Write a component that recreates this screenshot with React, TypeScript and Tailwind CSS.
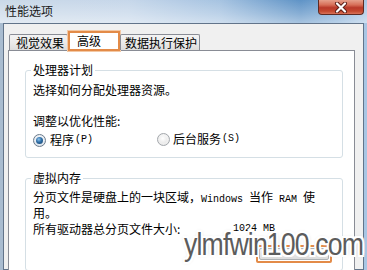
import React from "react";

const mono = "font-['Liberation_Mono',monospace] text-[10px]";

function Radio({ checked }: { checked: boolean }) {
  return (
    <div
      className={
        "w-[13px] h-[13px] rounded-full border flex items-center justify-center shrink-0 " +
        (checked
          ? "border-[#6b7a8a] bg-[radial-gradient(circle_at_50%_40%,#ffffff_0%,#dfe6ee_70%,#c3ccd6_100%)]"
          : "border-[#a3a7ac] bg-[radial-gradient(circle_at_50%_40%,#ffffff_0%,#ebebeb_70%,#d6d6d6_100%)]")
      }
    >
      {checked ? (
        <div className="w-[7px] h-[7px] rounded-full bg-[radial-gradient(circle_at_40%_35%,#8ec4ee_0%,#2f6ea6_45%,#123d66_100%)]" />
      ) : (
        <div className="w-[7px] h-[7px] rounded-full bg-[radial-gradient(circle_at_40%_35%,#ffffff_0%,#e3e3e3_100%)]" />
      )}
    </div>
  );
}

export default function App() {
  return (
    <div className="relative w-[367px] h-[270px] overflow-hidden flex flex-col bg-[linear-gradient(90deg,#a9bcd0_0%,#bcd2e8_50%,#a8c6e4_100%)] font-['Noto_Sans_CJK_SC',sans-serif] text-[12px] leading-[12px] text-black">
      {/* title bar */}
      <div className="h-[23px] shrink-0 flex items-start justify-between bg-[linear-gradient(180deg,rgba(255,255,255,0)_0%,rgba(255,255,255,0.25)_60%,rgba(255,255,255,0.45)_100%),linear-gradient(90deg,#cbd9e8_0%,#c6d7ea_35%,#a6c3e1_60%,#5f93c6_82%,#7fabd6_92%,#a9c7e5_100%)]">
        <span className="mt-[4px] ml-[5px] text-[12px] leading-[13px] text-[#1a1a1a]">性能选项</span>
        <div className="mr-[3px] w-[46px] h-[15px] rounded-b-[4px] border border-t-0 border-[#5e2a22] bg-[linear-gradient(180deg,#e6a08c_0%,#d76f58_35%,#b9392a_55%,#c4492f_80%,#d9735a_100%)] flex items-center justify-center">
          <svg width="14" height="11" viewBox="0 0 14 11">
            <path d="M3 1.5 L11 9.5 M11 1.5 L3 9.5" stroke="#5a1d16" strokeWidth="4" strokeLinecap="round" />
            <path d="M3 1.5 L11 9.5 M11 1.5 L3 9.5" stroke="#ffffff" strokeWidth="2.2" strokeLinecap="round" />
          </svg>
        </div>
      </div>

      {/* window body */}
      <div className="mx-[3px] flex-1 min-h-0 bg-[#f0f0f0] border border-[#62748a] pl-[4px] pr-[8px] pt-[7px] flex flex-col">
        {/* tabs */}
        <div className="flex items-end h-[19px] shrink-0 relative z-10">
          <div className="ml-[1px] w-[59px] h-[16px] border border-b-0 border-[#898c95] rounded-t-[2px] bg-[linear-gradient(180deg,#f3f3f3_0%,#ebebeb_50%,#dddddd_100%)] pl-[6px] flex items-center">
            视觉效果
          </div>
          <div className="w-[52px] h-[20px] -mb-px bg-white border-2 border-[#e38b48] shadow-[0_0_0_1px_#f3c8a4] pl-[7px] pt-[2px] flex items-start">
            高级
          </div>
          <div className="w-[80px] h-[16px] border border-b-0 border-[#898c95] rounded-t-[2px] bg-[linear-gradient(180deg,#f3f3f3_0%,#ebebeb_50%,#dddddd_100%)] pl-[4px] flex items-center">
            数据执行保护
          </div>
        </div>

        {/* tab panel */}
        <div className="flex-1 bg-white border border-b-0 border-[#898c95] pl-[16px] pr-[11px] pt-[13px]">
          <fieldset className="border border-[#d5dfe5] rounded-[3px] px-[5px] pb-[11px]">
            <legend className="px-[2px] leading-[12px]">处理器计划</legend>
            <div className="pl-[2px]">
              <div className="mt-[8px]">选择如何分配处理器资源。</div>
              <div className="mt-[19px]">调整以优化性能:</div>
              <div className="mt-[7px] flex items-center h-[12px]">
                <div className="w-[124px] flex items-center">
                  <Radio checked />
                  <span className="ml-[4px]">程序</span>
                  <span className={mono + " ml-[1px]"}>(P)</span>
                </div>
                <div className="flex items-center -mt-[2px]">
                  <Radio checked={false} />
                  <span className="ml-[3px]">后台服务</span>
                  <span className={mono + " ml-[1px]"}>(S)</span>
                </div>
              </div>
            </div>
          </fieldset>

          <fieldset className="mt-[14px] border border-[#d5dfe5] rounded-[3px] px-[5px] pb-[7px]">
            <legend className="px-[2px] leading-[12px]">虚拟内存</legend>
            <div className="pl-[2px]">
              <div className="mt-[6px] leading-[13px]">
                分页文件是硬盘上的一块区域，
                <span className={mono}>Windows </span>
                当作
                <span className={mono}> RAM </span>
                使
                <br />
                用。
              </div>
              <div className="mt-[4px] flex items-center h-[12px]">
                <span className="w-[200px]">所有驱动器总分页文件大小:</span>
                <span className={mono}>1024 MB</span>
              </div>
              <div className="mt-[10px] ml-[223px] w-[76px] h-[18px] border-2 border-[#e38b48] rounded-[2px] p-[1px]">
                <div className="w-full h-full border border-[#adb2b5] rounded-[2px] bg-[linear-gradient(180deg,#f6f6f6_0%,#e8e8e8_50%,#dcdcdc_100%)]" />
              </div>
            </div>
          </fieldset>
        </div>
      </div>

      {/* watermark overlay */}
      <div className="absolute left-[184px] top-[228px] origin-left scale-x-[0.86] font-['Liberation_Sans',Arial,sans-serif] text-[31px] leading-[34px] tracking-[-1px] text-[#5c5c5c] [text-shadow:2px_0_0_#fff,-2px_0_0_#fff,0_2px_0_#fff,0_-2px_0_#fff,2px_2px_0_#fff,-2px_-2px_0_#fff,2px_-2px_0_#fff,-2px_2px_0_#fff,0_0_4px_#aaa]">
        ylmfwin100.com
      </div>
    </div>
  );
}
